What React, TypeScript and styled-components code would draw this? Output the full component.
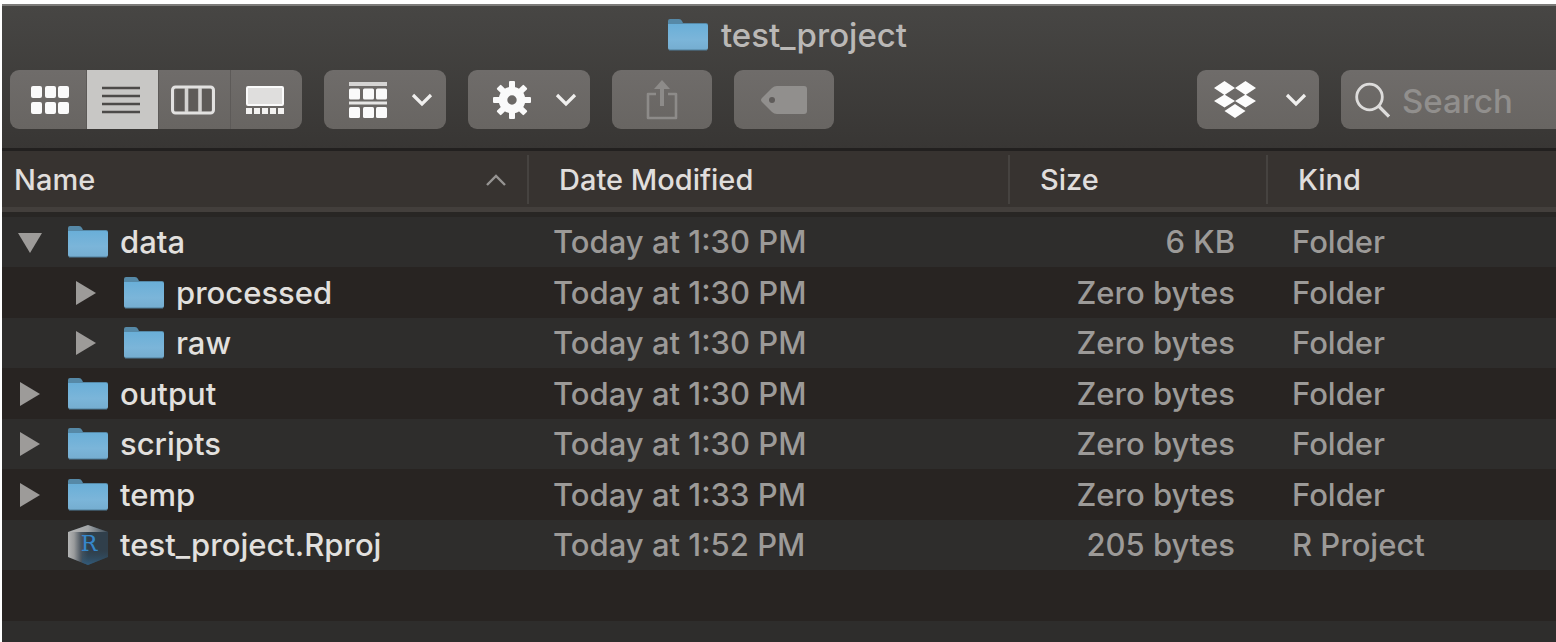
import React from "react";
import styled, { createGlobalStyle } from "styled-components";

const GlobalStyle = createGlobalStyle`
  * { box-sizing: border-box; }
  html, body { margin: 0; background: #ffffff; }
  body, button, input { font-family: Inter, "Liberation Sans", sans-serif; }
  button { border: 0; padding: 0; background: none; color: inherit; }
  svg { display: block; flex: none; }
`;

const Page = styled.div`
  min-height: 100vh;
  padding: 4px 0 0 2px;
  display: flex;
`;

const Window = styled.main`
  flex: 1;
  min-width: 0;
  display: flex;
  flex-direction: column;
  background: #282422;
`;

const Chrome = styled.header`
  border-top: 2px solid #7c7b79;
  border-bottom: 3px solid #22201f;
  background: linear-gradient(#474644, #383634);
`;

const Title = styled.h1`
  margin: 0;
  height: 64px;
  padding: 0 0 6px 16px;
  display: flex;
  align-items: center;
  justify-content: center;
  gap: 12px;
  color: #bab8b6;
  font-size: 33px;
  line-height: 40px;
  font-weight: 500;
`;

const Toolbar = styled.div`
  display: flex;
  gap: 22px;
  padding: 0 0 19px 8px;
`;

const Segments = styled.div`
  display: flex;
  border-radius: 9px;
  overflow: hidden;
`;

const surface = "linear-gradient(#6f6c6a, #686562)";

const Segment = styled.button<{ $active?: boolean; $wide?: boolean }>`
  width: ${(p) => (p.$wide ? 76 : 72)}px;
  height: 59px;
  display: flex;
  align-items: center;
  justify-content: center;
  padding: ${(p) => (p.$wide ? "0 0 0 3px" : "0 3px 0 0")};
  background: ${(p) => (p.$active ? "#c8c7c5" : surface)};
  & + & { border-left: 1px solid ${(p) => (p.$active ? "#c8c7c5" : "#5d5a58")}; }
`;

const ToolButton = styled.button<{ $menu?: boolean }>`
  width: ${(p) => (p.$menu ? 122 : 100)}px;
  height: 59px;
  display: flex;
  align-items: center;
  justify-content: ${(p) => (p.$menu ? "space-between" : "center")};
  padding: 0 ${(p) => (p.$menu ? "13px 0 25px" : "0")};
  border-radius: 9px;
  background: ${surface};
`;

const BrandButton = styled(ToolButton)`
  padding-left: 17px;
  padding-right: 12px;
`;

const Spacer = styled.div`
  flex: 1;
`;

const SearchBox = styled.label`
  width: 215px;
  height: 59px;
  display: flex;
  align-items: center;
  gap: 12px;
  padding-left: 14px;
  border-radius: 9px 0 0 9px;
  background: ${surface};
`;

const SearchInput = styled.input`
  flex: 1;
  min-width: 0;
  padding: 2px 0 0;
  border: 0;
  outline: 0;
  background: none;
  color: #e6e4e2;
  font-size: 33px;
  line-height: 40px;
  font-weight: 500;
  &::placeholder { color: #918f8d; opacity: 1; }
`;

const FileTable = styled.table`
  width: 100%;
  table-layout: fixed;
  border-collapse: collapse;
`;

const Col = styled.col<{ $width?: number }>`
  width: ${(p) => (p.$width ? `${p.$width}px` : "auto")};
`;

const HeadCell = styled.th`
  height: 66px;
  padding: 4px 0 13px;
  background: linear-gradient(#373330 56px, #433f3c 56px, #433f3c 61px, #282624 61px);
  text-align: left;
`;

const HeadInner = styled.div<{ $inset: number; $divided?: boolean }>`
  height: 49px;
  display: flex;
  align-items: center;
  justify-content: space-between;
  padding: 0 21px 0 ${(p) => p.$inset}px;
  border-left: ${(p) => (p.$divided ? "2px solid #464340" : "0")};
`;

const SortButton = styled.button`
  flex: 1;
  display: flex;
  align-items: center;
  justify-content: space-between;
  color: #e0dedc;
  font-size: 29px;
  line-height: 36px;
  font-weight: 500;
`;

const Row = styled.tr`
  height: 50px;
  background: #2e2d2c;
  &:nth-child(even) { height: 51px; background: #282422; }
`;

const Cell = styled.td<{ $align?: "right"; $inset?: number }>`
  padding: 0 ${(p) => (p.$align ? 31 : 0)}px 0 ${(p) => p.$inset ?? 0}px;
  text-align: ${(p) => p.$align ?? "left"};
  color: #9c9a98;
  font-size: 31px;
  line-height: 40px;
  font-weight: 500;
  white-space: nowrap;
`;

const Entry = styled.div<{ $depth: number }>`
  display: flex;
  align-items: center;
  padding-left: ${(p) => 14 + p.$depth * 56}px;
  color: #e2e0de;
`;

const Disclosure = styled.button`
  width: 28px;
  height: 40px;
  display: flex;
  align-items: center;
  justify-content: center;
`;

const NoDisclosure = styled.span`
  width: 28px;
`;

const EntryIcon = styled.span`
  margin: 0 11px 0 23px;
`;

const Filler = styled.div`
  flex: 1;
  background: repeating-linear-gradient(#282422 0 51px, #2e2d2c 51px 101px);
`;

const Folder = () => (
  <svg width="42" height="34" viewBox="0 0 42 34" aria-hidden="true">
    <defs>
      <linearGradient id="folderFace" x1="0" y1="0" x2="0" y2="1">
        <stop offset="0" stopColor="#6aafd8" />
        <stop offset="0.6" stopColor="#7bb5d9" />
        <stop offset="1" stopColor="#75add0" />
      </linearGradient>
    </defs>
    <path d="M1 3q0-2 2-2h9q2 0 3 2l1 2h23q2 0 2 2v5H1z" fill="#5689a7" />
    <path d="M1 6h38q2 0 2 2v22q0 2-2 2H3q-2 0-2-2z" fill="url(#folderFace)" />
    <path d="M2 32h38" stroke="#507e9b" strokeWidth="1" />
  </svg>
);

const RCube = () => (
  <svg width="42" height="42" viewBox="0 0 42 42" aria-hidden="true">
    <defs>
      <linearGradient id="cubeLeft" x1="0" y1="0" x2="1" y2="0">
        <stop offset="0" stopColor="#b4b5b5" />
        <stop offset="0.3" stopColor="#999b9c" />
        <stop offset="0.65" stopColor="#4b5660" />
        <stop offset="1" stopColor="#303f4b" />
      </linearGradient>
      <linearGradient id="cubeTop" x1="0" y1="0" x2="1" y2="0">
        <stop offset="0" stopColor="#b4b5b5" />
        <stop offset="0.5" stopColor="#a3a6a8" />
        <stop offset="1" stopColor="#3c4c59" />
      </linearGradient>
      <linearGradient id="cubeBase" x1="0" y1="0" x2="0" y2="1">
        <stop offset="0.2" stopColor="#31495a" stopOpacity="0" />
        <stop offset="1" stopColor="#315c7d" />
      </linearGradient>
    </defs>
    <path d="M21 1L41 8V33L21 41L1 33V8z" fill="#303f4b" />
    <path d="M1 8L21 8V41L1 33z" fill="url(#cubeLeft)" />
    <path d="M21 1L41 8H1z" fill="url(#cubeTop)" />
    <path d="M15 22H41V33L21 41L15 38.6z" fill="url(#cubeBase)" />
    <text x="22" y="27" textAnchor="middle" fontFamily="DejaVu Serif, serif" fontSize="22" fill="#3587cb">R</text>
  </svg>
);

const Triangle = ({ open }: { open?: boolean }) => (
  <svg width="24" height="24" viewBox="0 0 24 24" aria-hidden="true">
    <path d={open ? "M0 3H24L12 23z" : "M2 0V24L22 12z"} fill="#9d9b99" />
  </svg>
);

const Chevron = () => (
  <svg width="22" height="14" viewBox="0 0 22 14" aria-hidden="true">
    <path d="M2 2L11 11L20 2" fill="none" stroke="#f0efee" strokeWidth="3.2" />
  </svg>
);

const SortMark = () => (
  <svg width="20" height="14" viewBox="0 0 20 14" aria-hidden="true">
    <path d="M1 12L10 3L19 12" fill="none" stroke="#969492" strokeWidth="2.4" />
  </svg>
);

const GridIcon = () => (
  <svg width="40" height="30" viewBox="0 0 40 30" fill="#fafafa" aria-hidden="true">
    {[1, 17].map((y) =>
      [1, 15, 28].map((x) => <rect key={`${x}-${y}`} x={x} y={y} width="11" height="12" rx="2" />)
    )}
  </svg>
);

const ListIcon = () => (
  <svg width="38" height="30" viewBox="0 0 38 30" stroke="#4c4a48" strokeWidth="2.6" aria-hidden="true">
    <path d="M0 3H38M0 11H38M0 19H38M0 27H38" />
  </svg>
);

const ColumnsIcon = () => (
  <svg width="44" height="30" viewBox="0 0 44 30" fill="none" aria-hidden="true">
    <path d="M9 4V26M22.2 4V26M35.5 4V26" stroke="#5e5b58" strokeWidth="9" />
    <rect x="1.5" y="2" width="41" height="26" rx="3" stroke="#e2e1e0" strokeWidth="3" />
    <path d="M15.5 3V27M29 3V27" stroke="#d3d2d0" strokeWidth="3.5" />
  </svg>
);

const GalleryIcon = () => (
  <svg width="38" height="30" viewBox="0 0 38 30" fill="#f3f2f1" aria-hidden="true">
    <rect x="1" y="2" width="36" height="18" rx="1" fill="#dfdedd" stroke="#fafafa" strokeWidth="2" />
    {[0, 8, 16, 24, 32].map((x) => <rect key={x} x={x} y="23" width="6" height="6" />)}
  </svg>
);

const GroupIcon = () => (
  <svg width="38" height="38" viewBox="0 0 38 38" fill="#fafafa" aria-hidden="true">
    <rect width="38" height="4" y="1" fill="#d5d4d3" />
    <rect width="38" height="3" y="20.5" fill="#e6e5e4" />
    {[7.5, 26].map((y) =>
      [0, 14, 27].map((x) => <rect key={`${x}-${y}`} x={x} y={y} width="11" height="11" rx="1.5" />)
    )}
  </svg>
);

const GearIcon = () => (
  <svg width="38" height="38" viewBox="-19 -19 38 38" aria-hidden="true">
    <circle r="9" fill="none" stroke="#fafafa" strokeWidth="8.6" />
    {[0, 45, 90, 135, 180, 225, 270, 315].map((a) => (
      <rect key={a} x="-3" y="-19" width="6" height="9" rx="1" fill="#fafafa" transform={`rotate(${a})`} />
    ))}
  </svg>
);

const ShareIcon = () => (
  <svg width="32" height="40" viewBox="0 0 32 40" fill="none" stroke="#8d8b89" strokeWidth="2.6" aria-hidden="true">
    <path d="M10 14H2V38H30V14H22" strokeLinejoin="round" />
    <path d="M16 26V3" strokeWidth="4" />
    <path d="M8 9L16 0L24 9z" fill="#8d8b89" stroke="none" />
  </svg>
);

const TagIcon = () => (
  <svg width="46" height="28" viewBox="0 0 46 28" aria-hidden="true">
    <path d="M11 2Q13 0 16 0H43Q46 0 46 3V25Q46 28 43 28H16Q13 28 11 26L1 16Q-1 14 1 12z" fill="#918f8d" />
    <circle cx="11" cy="14" r="3" fill="#5f5c5a" />
  </svg>
);

const DropboxIcon = () => (
  <svg width="42" height="38" viewBox="0 0 42 38" fill="#fcfcfc" aria-hidden="true">
    <path d="M10.5 0L21 7L10.5 14L0 7zM31.5 0L42 7L31.5 14L21 7zM10.5 13.5L21 20L10.5 26.5L0 20zM31.5 13.5L42 20L31.5 26.5L21 20zM21 23L31.5 30L21 37L10.5 30z" />
  </svg>
);

const SearchIcon = () => (
  <svg width="35" height="36" viewBox="0 0 35 36" fill="none" stroke="#dddcdb" strokeWidth="2.8" aria-hidden="true">
    <circle cx="14.5" cy="15" r="12.8" />
    <path d="M23.5 24L34 34.5" strokeWidth="3.2" />
  </svg>
);

type Item = {
  name: string;
  date: string;
  size: string;
  kind: string;
  depth?: number;
  open?: boolean;
};

const items: Item[] = [
  { name: "data", date: "Today at 1:30 PM", size: "6 KB", kind: "Folder", open: true },
  { name: "processed", date: "Today at 1:30 PM", size: "Zero bytes", kind: "Folder", depth: 1 },
  { name: "raw", date: "Today at 1:30 PM", size: "Zero bytes", kind: "Folder", depth: 1 },
  { name: "output", date: "Today at 1:30 PM", size: "Zero bytes", kind: "Folder" },
  { name: "scripts", date: "Today at 1:30 PM", size: "Zero bytes", kind: "Folder" },
  { name: "temp", date: "Today at 1:33 PM", size: "Zero bytes", kind: "Folder" },
  { name: "test_project.Rproj", date: "Today at 1:52 PM", size: "205 bytes", kind: "R Project" },
];

const columns = [
  { label: "Name", inset: 12, sorted: true },
  { label: "Date Modified", inset: 30 },
  { label: "Size", inset: 30 },
  { label: "Kind", inset: 30 },
];

export default function App() {
  return (
    <>
      <GlobalStyle />
      <Page>
        <Window>
          <Chrome>
            <Title>
              <Folder />
              test_project
            </Title>
            <Toolbar>
              <Segments role="group" aria-label="View">
                <Segment $wide aria-label="Icons"><GridIcon /></Segment>
                <Segment $active aria-label="List" aria-pressed="true"><ListIcon /></Segment>
                <Segment aria-label="Columns"><ColumnsIcon /></Segment>
                <Segment aria-label="Gallery"><GalleryIcon /></Segment>
              </Segments>
              <ToolButton $menu aria-label="Group by"><GroupIcon /><Chevron /></ToolButton>
              <ToolButton $menu aria-label="Actions"><GearIcon /><Chevron /></ToolButton>
              <ToolButton aria-label="Share" disabled><ShareIcon /></ToolButton>
              <ToolButton aria-label="Edit tags" disabled><TagIcon /></ToolButton>
              <Spacer />
              <BrandButton $menu aria-label="Dropbox"><DropboxIcon /><Chevron /></BrandButton>
              <SearchBox>
                <SearchIcon />
                <SearchInput type="text" placeholder="Search" aria-label="Search" />
              </SearchBox>
            </Toolbar>
          </Chrome>
          <FileTable>
            <colgroup>
              <Col />
              <Col $width={481} />
              <Col $width={258} />
              <Col $width={290} />
            </colgroup>
            <thead>
              <tr>
                {columns.map((c) => (
                  <HeadCell key={c.label} scope="col">
                    <HeadInner $inset={c.inset} $divided={!c.sorted}>
                      <SortButton>
                        {c.label}
                        {c.sorted && <SortMark />}
                      </SortButton>
                    </HeadInner>
                  </HeadCell>
                ))}
              </tr>
            </thead>
            <tbody>
              {items.map((item) => (
                <Row key={item.name}>
                  <Cell>
                    <Entry $depth={item.depth ?? 0}>
                      {item.kind === "Folder" ? (
                        <Disclosure aria-label={`Toggle ${item.name}`} aria-expanded={!!item.open}>
                          <Triangle open={item.open} />
                        </Disclosure>
                      ) : (
                        <NoDisclosure />
                      )}
                      <EntryIcon>{item.kind === "Folder" ? <Folder /> : <RCube />}</EntryIcon>
                      {item.name}
                    </Entry>
                  </Cell>
                  <Cell $inset={26}>{item.date}</Cell>
                  <Cell $align="right">{item.size}</Cell>
                  <Cell $inset={26}>{item.kind}</Cell>
                </Row>
              ))}
            </tbody>
          </FileTable>
          <Filler />
        </Window>
      </Page>
    </>
  );
}
